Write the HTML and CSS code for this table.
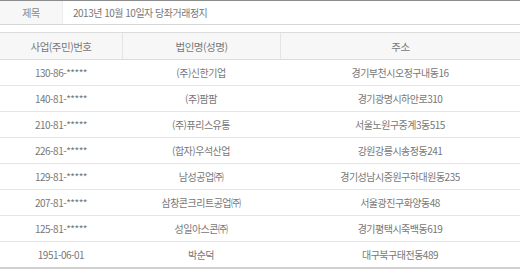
FILE: index.html
```html
<!DOCTYPE html>
<html lang="ko">
<head>
<meta charset="utf-8">
<link rel="stylesheet" href="styles.css">
</head>
<body>
<div class="page">
  <div class="title-row">
    <div class="title-label">제목</div>
    <div class="title-value">2013년 10월 10일자 당좌거래정지</div>
  </div>
  <div class="list">
    <div class="row head">
      <div class="cell">사업(주민)번호</div>
      <div class="cell">법인명(성명)</div>
      <div class="cell">주소</div>
    </div>
    <div class="row"><div class="cell">130-86-*****</div><div class="cell">(주)신한기업</div><div class="cell">경기부천시오정구내동16</div></div>
    <div class="row"><div class="cell">140-81-*****</div><div class="cell">(주)팜팜</div><div class="cell">경기광명시하안로310</div></div>
    <div class="row"><div class="cell">210-81-*****</div><div class="cell">(주)퓨리스유통</div><div class="cell">서울노원구중계3동515</div></div>
    <div class="row"><div class="cell">226-81-*****</div><div class="cell">(합자)우석산업</div><div class="cell">강원강릉시송정동241</div></div>
    <div class="row"><div class="cell">129-81-*****</div><div class="cell">남성공업㈜</div><div class="cell">경기성남시중원구하대원동235</div></div>
    <div class="row"><div class="cell">207-81-*****</div><div class="cell">삼창콘크리트공업㈜</div><div class="cell">서울광진구화양동48</div></div>
    <div class="row"><div class="cell">125-81-*****</div><div class="cell">성일아스콘㈜</div><div class="cell">경기평택시죽백동619</div></div>
    <div class="row last"><div class="cell">1951-06-01</div><div class="cell">박순덕</div><div class="cell">대구북구태전동489</div></div>
  </div>
</div>
</body>
</html>
```
FILE: styles.css
```css
html, body {
  margin: 0;
  padding: 0;
  background: #fff;
}
body {
  font-family: "Noto Sans CJK KR", "Noto Sans", sans-serif;
  font-size: 10px;
  letter-spacing: -0.5px;
  color: #777;
}
.page {
  width: 520px;
}
.title-row {
  display: flex;
  height: 23px;
  border-top: 1px solid #8c8c8c;
  border-bottom: 1px solid #d6d6d6;
}
.title-label {
  width: 62px;
  background: #f7f7f7;
  border-right: 1px solid #ececec;
  display: flex;
  align-items: center;
  justify-content: center;
  color: #888;
}
.title-value {
  flex: 1;
  display: flex;
  align-items: center;
  padding-left: 10px;
  color: #777;
}
.list {
  margin-top: 7px;
  border-top: 1px solid #dcdcdc;
}
.row {
  display: grid;
  grid-template-columns: 122px 158px 1fr;
  height: 25px;
  border-bottom: 1px solid #e6e6e6;
}
.row .cell {
  display: flex;
  align-items: center;
  justify-content: center;
  white-space: nowrap;
}
.row.head {
  height: 26px;
  background: #f7f7f7;
  border-bottom: 1px solid #dcdcdc;
  color: #777;
  font-size: 10.5px;
}
.row.head .cell + .cell {
  border-left: 1px solid #e4e4e4;
}
.row.last {
  border-bottom: 2px solid #d0d0d0;
}
```
